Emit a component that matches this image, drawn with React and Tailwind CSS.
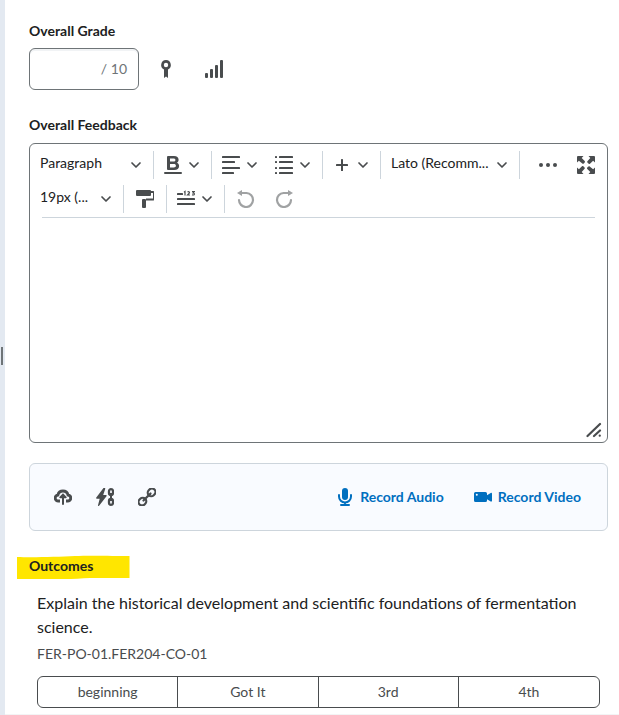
import { useState } from 'react';

function Icon({ children, size = 18 }) {
  return (
    <svg width={size} height={size} viewBox={`0 0 ${size} ${size}`} fill="currentColor" className="shrink-0" aria-hidden="true">
      {children}
    </svg>
  );
}

function Chevron({ className = '' }) {
  return (
    <svg width="12" height="12" viewBox="0 0 12 12" className={`shrink-0 ${className}`} aria-hidden="true">
      <path d="M2 4l4 4 4-4" fill="none" stroke="#494c4e" strokeWidth="1.7" strokeLinecap="round" strokeLinejoin="round" />
    </svg>
  );
}

function ToolbarSelect({ label, value, className }) {
  return (
    <div className={`grid h-7 items-center ${className}`}>
      <select
        aria-label={label}
        className="col-start-1 row-start-1 h-6 w-full appearance-none self-start bg-transparent text-sm text-[#202122] outline-none"
      >
        <option>{value}</option>
      </select>
      <Chevron className="pointer-events-none col-start-1 row-start-1 justify-self-end" />
    </div>
  );
}

function SplitButton({ label, children }) {
  return (
    <button type="button" aria-label={label} className="flex items-center gap-1.5">
      <Icon>{children}</Icon>
      <Chevron />
    </button>
  );
}

function Group({ children, className = 'pl-2.5 pr-[11px]' }) {
  return <div className={`flex h-7 items-center border-r border-[#cdd5dc] ${className}`}>{children}</div>;
}

function Toolbar() {
  return (
    <div className="pt-[7px]">
      <div className="flex">
        <Group>
          <ToolbarSelect label="Format" value="Paragraph" className="w-[102px]" />
        </Group>
        <Group>
          <SplitButton label="Bold">
            <path
              fillRule="evenodd"
              d="M4 0h6c3 0 4.600 1.400 4.600 3.800 0 1.400-.6 2.400-1.700 3 1.400.5 2.200 1.700 2.200 3.300 0 2.600-1.800 3.900-4.900 3.900H4a1 1 0 0 1-1-1V1a1 1 0 0 1 1-1zM6 2.600v3h3.400c1.300 0 2-.5 2-1.500s-.7-1.500-2-1.500zM6 8.100v3.300h3.800c1.400 0 2.100-.6 2.100-1.600 0-1.100-.7-1.700-2.100-1.700z"
            />
            <rect y="16" width="18" height="2" rx="1" />
          </SplitButton>
        </Group>
        <Group className="gap-[17px] pl-2.5 pr-[11px]">
          <SplitButton label="Alignment">
            <rect width="18" height="2" rx=".6" />
            <rect y="5" width="13" height="2" rx=".6" />
            <rect y="11" width="18" height="2" rx=".6" />
            <rect y="16" width="12" height="2" rx=".6" />
          </SplitButton>
          <SplitButton label="List">
            <rect x="4" width="14" height="2" rx=".6" />
            <rect x="4" y="5" width="14" height="2" rx=".6" />
            <rect x="4" y="11" width="14" height="2" rx=".6" />
            <rect x="4" y="16" width="14" height="2" rx=".6" />
            <rect width="2" height="2" rx=".6" />
            <rect y="5" width="2" height="2" rx=".6" />
            <rect y="11" width="2" height="2" rx=".6" />
            <rect y="16" width="2" height="2" rx=".6" />
          </SplitButton>
        </Group>
        <Group>
          <SplitButton label="Insert">
            <rect x="3" y="8" width="12" height="2" rx=".6" />
            <rect x="8" y="3" width="2" height="12" rx=".6" />
          </SplitButton>
        </Group>
        <Group>
          <ToolbarSelect label="Font" value="Lato (Recomm..." className="w-[117px]" />
        </Group>
        <div className="ml-auto flex items-center gap-5 pr-3">
          <button type="button" aria-label="More actions">
            <Icon>
              <circle cx="2" cy="9" r="2" />
              <circle cx="9" cy="9" r="2" />
              <circle cx="16" cy="9" r="2" />
            </Icon>
          </button>
          <button type="button" aria-label="Full screen">
            <Icon>
              <path d="M1 0h5.500L4.700 1.900 7.700 5c.6.600.2 1.300-.4 1.900s-1.400 1.300-2 .7L1.900 4.700 0 6.500V1a1 1 0 0 1 1-1z" />
              <path d="M18 1v5.500l-1.900-1.800-3.100 3c-.6.600-1.300.2-1.900-.4s-1.300-1.400-.7-2l2.900-3.400L11.500 0H17a1 1 0 0 1 1 1z" />
              <path d="M0 17v-5.500l1.900 1.800 3.100-3c.6-.6 1.300-.2 1.900.4s1.300 1.400.7 2l-2.900 3.400L6.500 18H1a1 1 0 0 1-1-1z" />
              <path d="M17 18h-5.500l1.800-1.900-3-3.100c-.6-.6-.2-1.300.4-1.900s1.400-1.300 2-.7l3.400 2.900 1.900-1.800V17a1 1 0 0 1-1 1z" />
            </Icon>
          </button>
        </div>
      </div>

      <div className="mt-1.5 flex">
        <Group>
          <ToolbarSelect label="Font size" value="19px (..." className="w-[72px]" />
        </Group>
        <Group className="px-3">
          <button type="button" aria-label="Format painter">
            <Icon>
              <rect width="15" height="6" rx="1" />
              <path d="M14 2h3a1 1 0 0 1 1 1v5.500a1 1 0 0 1-1 1h-7" fill="none" stroke="currentColor" strokeWidth="2" />
              <rect x="6" y="9" width="4" height="9" rx="1" />
            </Icon>
          </button>
        </Group>
        <Group>
          <SplitButton label="Word count">
            <rect y="3" width="6" height="2" rx=".6" />
            <rect y="8" width="18" height="2" rx=".6" />
            <rect y="13" width="18" height="2" rx=".6" />
            <path
              d="M7 2.200l1-.7v4M10.500 2c1.500-1 2.500.2 1.500 1.300l-1.500 1.700h2.500M15 1.600h2.300l-1.100 1.400c1.600 0 1.600 2.200-.1 2l-1.100-.2"
              fill="none"
              stroke="currentColor"
              strokeWidth="1.200"
            />
          </SplitButton>
        </Group>
        <div className="flex items-center gap-5 pl-3 text-[#a0a2a3]">
          <button type="button" aria-label="Undo">
            <Icon>
              <path d="M2 10a7 7 0 1 0 7.500-7H4" fill="none" stroke="currentColor" strokeWidth="2.200" strokeLinecap="round" />
              <path d="M0 3l5-3v6z" />
            </Icon>
          </button>
          <button type="button" aria-label="Redo">
            <Icon>
              <path d="M16 10a7 7 0 1 1-7.500-7H14" fill="none" stroke="currentColor" strokeWidth="2.200" strokeLinecap="round" />
              <path d="M18 3l-5-3v6z" />
            </Icon>
          </button>
        </div>
      </div>
      <div className="mx-3 mt-1 border-b border-[#cdd5dc]" />
    </div>
  );
}

function Editor() {
  return (
    <div className="relative flex h-[300px] flex-col rounded-md border border-[#6e7477]">
      <Toolbar />
      <textarea id="feedback" className="w-full flex-1 resize-none bg-transparent px-3 py-2 text-[19px] outline-none" />
      <svg width="16" height="16" viewBox="0 0 16 16" className="absolute right-[5px] bottom-1" aria-hidden="true">
        <path d="M1.500 14L14 2M8 14l6-5.500M13.700 13.700h.1" stroke="#494c4e" strokeWidth="2.200" strokeLinecap="round" />
      </svg>
    </div>
  );
}

function AttachBar() {
  return (
    <div className="flex h-[68px] items-center rounded-md border border-[#cdd5dc] bg-[#f9fbff] pr-[26px] pl-6">
      <div className="flex gap-6">
        <button type="button" aria-label="File upload">
          <Icon>
            <path
              d="M6 13H4.500a3 3 0 0 1-.6-6A5.200 5.200 0 0 1 14 7a3 3 0 0 1-.5 6H12"
              fill="none"
              stroke="currentColor"
              strokeWidth="2.900"
            />
            <path d="M9 5.300l3.400 3.400c.7.700.2 1.500-.7 1.500H10V16a1 1 0 0 1-2 0v-5.800H6.300c-.9 0-1.400-.8-.7-1.500z" />
          </Icon>
        </button>
        <button type="button" aria-label="Quicklink">
          <Icon>
            <path d="M7.500 0L.3 9.500c-.4.600-.1 1.200.5 1.200h2.900L2 17.200c-.2.800.8 1.100 1.300.4l7.200-9.400c.4-.6.100-1.200-.5-1.200H7.200L9.300.8C9.500.1 8.300-.5 7.500 0z" />
            <rect x="13" y="1.200" width="4" height="5.800" rx="2" fill="none" stroke="currentColor" strokeWidth="2.300" />
            <rect x="13" y="11" width="4" height="5.800" rx="2" fill="none" stroke="currentColor" strokeWidth="2.300" />
            <path d="M14 5h2v8h-2z" />
          </Icon>
        </button>
        <button type="button" aria-label="Attach link">
          <Icon>
            <g fill="none" stroke="currentColor" strokeWidth="2.200" transform="rotate(-45 9 9)">
              <rect x="-1.500" y="5.500" width="8" height="7" rx="3.500" />
              <rect x="11.500" y="5.500" width="8" height="7" rx="3.500" />
              <path d="M4 9h10" strokeLinecap="round" />
            </g>
          </Icon>
        </button>
      </div>
      <div className="ml-auto flex gap-[30px] text-sm font-bold text-[#006fbf]">
        <button type="button" className="flex items-center gap-1.5">
          <Icon>
            <rect x="6" width="6" height="12" rx="3" />
            <path d="M3 7v1.500a6 6 0 0 0 12 0V7M9 14.500V17M5 17h8" fill="none" stroke="currentColor" strokeWidth="2" strokeLinecap="round" />
          </Icon>
          Record Audio
        </button>
        <button type="button" className="flex items-center gap-1.5">
          <Icon>
            <path
              fillRule="evenodd"
              d="M1.500 4h10A1.500 1.500 0 0 1 13 5.500v1.700L16.700 5c.8-.4 1.300 0 1.300.7v7c0 .8-.5 1.100-1.300.7L13 11.200v1.300a1.500 1.500 0 0 1-1.500 1.500h-10A1.500 1.500 0 0 1 0 12.500v-7A1.500 1.500 0 0 1 1.500 4zM2.800 5.700a1 1 0 1 0 0 2 1 1 0 0 0 0-2z"
            />
          </Icon>
          Record Video
        </button>
      </div>
    </div>
  );
}

const levels = ['beginning', 'Got It', '3rd', '4th'];

function Outcomes() {
  const [selected, setSelected] = useState(null);

  return (
    <section className="mt-[25px]">
      <h2 className="relative isolate text-sm leading-5 font-bold">
        <svg width="113" height="24" viewBox="0 0 113 24" className="absolute -top-px -left-3 -z-10" aria-hidden="true">
          <path d="M0 2C15 2.500 40 2 58 1c15-.6 40 0 54.500 0v22H80c-12 0-20 1-34 1.200H0z" fill="#ffe600" />
        </svg>
        Outcomes
      </h2>
      <div className="mt-[15px] px-2">
        <p className="text-base leading-6">
          Explain the historical development and scientific foundations of fermentation science.
        </p>
        <p className="mt-[5px] text-sm leading-5 text-[#494c4e]">FER-PO-01.FER204-CO-01</p>
        <div className="mt-3 grid grid-cols-4 divide-x divide-[#494c4e] rounded-md border border-[#494c4e]">
          {levels.map((level) => (
            <button
              key={level}
              type="button"
              aria-pressed={selected === level}
              onClick={() => setSelected(level)}
              className="h-[30px] text-sm text-[#494c4e]"
            >
              {level}
            </button>
          ))}
        </div>
      </div>
    </section>
  );
}

export default function App() {
  return (
    <div className="flex min-h-screen bg-white font-['Lato',sans-serif] text-[#202122]">
      {/* Drag handle between the submission and the grading panel */}
      <div className="flex w-[5px] shrink-0 items-center bg-[#e3e9f1] pb-1 pl-px">
        <div className="h-[18px] w-0.5 bg-[#6e7477]" />
      </div>

      <main className="min-w-0 flex-1 border-b border-[#f3f4f5] pt-[21px] pr-[11px] pb-1.5 pl-6 text-[#494c4e]">
        <label htmlFor="grade" className="block text-sm leading-5 font-bold text-[#202122]">
          Overall Grade
        </label>
        <div className="mt-[7px] flex items-center">
          <div className="flex h-[42px] w-[110px] items-center rounded-md border border-[#6e7477] px-[11px] text-sm text-[#6e7477] shadow-[inset_0_2px_0_0_#f1f3f5]">
            <input id="grade" type="text" className="h-full w-full min-w-0 bg-transparent text-right outline-none" />
            <span className="shrink-0">/ 10</span>
          </div>
          <button type="button" aria-label="Rubric" className="ml-[18px]">
            <Icon>
              <path fillRule="evenodd" d="M9 0a5 5 0 0 1 2 9.500V18l-2-1.500L7 18V9.500A5 5 0 0 1 9 0zm0 2.800a2.200 2.200 0 1 0 0 4.400 2.200 2.200 0 0 0 0-4.400z" />
            </Icon>
          </button>
          <button type="button" aria-label="Class statistics" className="ml-[30px]">
            <Icon>
              <rect y="13" width="3" height="5" rx="1" />
              <rect x="5" y="9" width="3" height="9" rx="1" />
              <rect x="10" y="5" width="3" height="13" rx="1" />
              <rect x="15" width="3" height="18" rx="1" />
            </Icon>
          </button>
        </div>

        <label htmlFor="feedback" className="mt-[25px] mb-2 block text-sm leading-5 font-bold text-[#202122]">
          Overall Feedback
        </label>
        <Editor />
        <div className="mt-5">
          <AttachBar />
        </div>
        <div className="text-[#202122]">
          <Outcomes />
        </div>
      </main>
    </div>
  );
}
